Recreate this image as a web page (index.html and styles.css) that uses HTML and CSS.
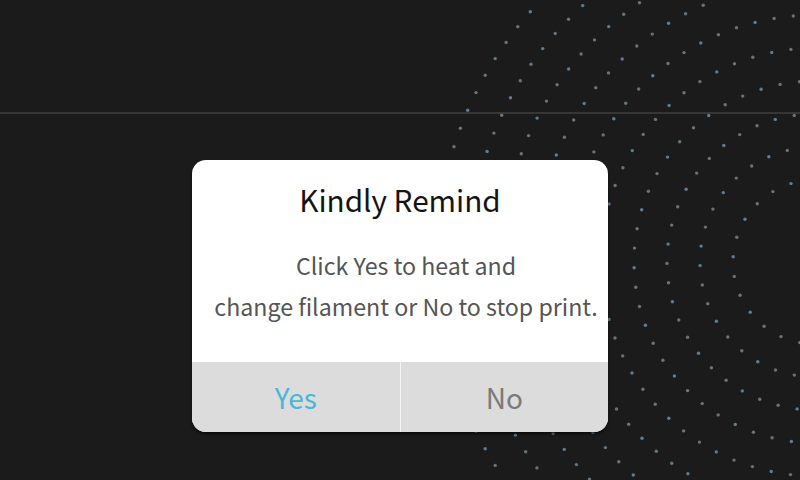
FILE: index.html
```html
<!DOCTYPE html>
<html lang="en">
<head>
<meta charset="utf-8">
<title>Kindly Remind</title>
<link rel="stylesheet" href="styles.css">
</head>
<body>
<div class="screen">
  <svg class="dots" width="800" height="480" viewBox="0 0 800 480" aria-hidden="true"></svg>
  <header class="topbar"></header>
  <main class="content"></main>
  <div class="overlay">
    <div class="dialog">
      <div class="dialog-body">
        <h1 class="dialog-title">Kindly Remind</h1>
        <p class="dialog-text">Click Yes to heat and<br>change filament or No to stop print.</p>
      </div>
      <div class="dialog-actions">
        <button class="btn btn-yes">Yes</button>
        <button class="btn btn-no">No</button>
      </div>
    </div>
  </div>
</div>
<script src="dots.js"></script>
</body>
</html>
```
FILE: styles.css
```css
* { box-sizing: border-box; }
html, body {
  margin: 0;
  padding: 0;
  background: #1b1b1b;
}
.screen {
  position: relative;
  width: 800px;
  height: 480px;
  overflow: hidden;
  background: #1b1b1b;
  font-family: "Noto Sans CJK SC", "Noto Sans", sans-serif;
  display: flex;
  flex-direction: column;
}
.dots {
  position: absolute;
  left: 0;
  top: 0;
}
.topbar {
  height: 114px;
  border-bottom: 2px solid #363636;
  flex: none;
}
.content { flex: 1; }
.overlay {
  position: absolute;
  inset: 0;
  display: flex;
  justify-content: center;
  align-items: flex-start;
  padding-top: 160px;
}
.dialog {
  width: 416px;
  height: 272px;
  background: #ffffff;
  border-radius: 14px;
  overflow: hidden;
  display: flex;
  flex-direction: column;
  box-shadow: 0 2px 3px rgba(0,0,0,0.6);
}
.dialog-body {
  height: 202px;
  display: flex;
  flex-direction: column;
  align-items: center;
  padding-top: 18px;
}
.dialog-title {
  margin: 0;
  font-size: 29.7px;
  font-weight: 400;
  color: #141414;
  line-height: 44px;
}
.dialog-text {
  margin: 23px 0 0;
  padding-left: 12px;
  font-size: 23.2px;
  line-height: 41px;
  color: #555555;
  text-align: center;
  white-space: nowrap;
}
.dialog-actions {
  flex: 1;
  display: flex;
  background: #dcdcdc;
}
.btn {
  flex: 1;
  border: none;
  background: transparent;
  font-family: inherit;
  font-size: 28px;
  padding: 0;
  margin: 0;
}
.btn-yes {
  color: #4bb7d6;
  border-right: 1px solid #f4f4f4;
}
.btn-no { color: #7a7a7a; }
```
FILE: dots.js
```js
(function () {
  var svg = document.querySelector('.dots');
  var ns = 'http://www.w3.org/2000/svg';
  var cx = 815, cy = 262;
  for (var k = 0; k < 10; k++) {
    var r = 379 - 33 * k;
    var n = Math.round((2 * Math.PI * r) / 19.5);
    var phase = k * 0.41;
    for (var i = 0; i < n; i++) {
      var a = phase + (i * 2 * Math.PI) / n;
      var x = cx + r * Math.cos(a);
      var y = cy + r * Math.sin(a);
      if (x < -2 || x > 802 || y < -2 || y > 482) continue;
      var c = document.createElementNS(ns, 'circle');
      c.setAttribute('cx', x.toFixed(1));
      c.setAttribute('cy', y.toFixed(1));
      c.setAttribute('r', '1.7');
      c.setAttribute('fill', (i % 3 === 0) ? '#5d7f95' : '#66747e');
      svg.appendChild(c);
    }
  }
})();
```
